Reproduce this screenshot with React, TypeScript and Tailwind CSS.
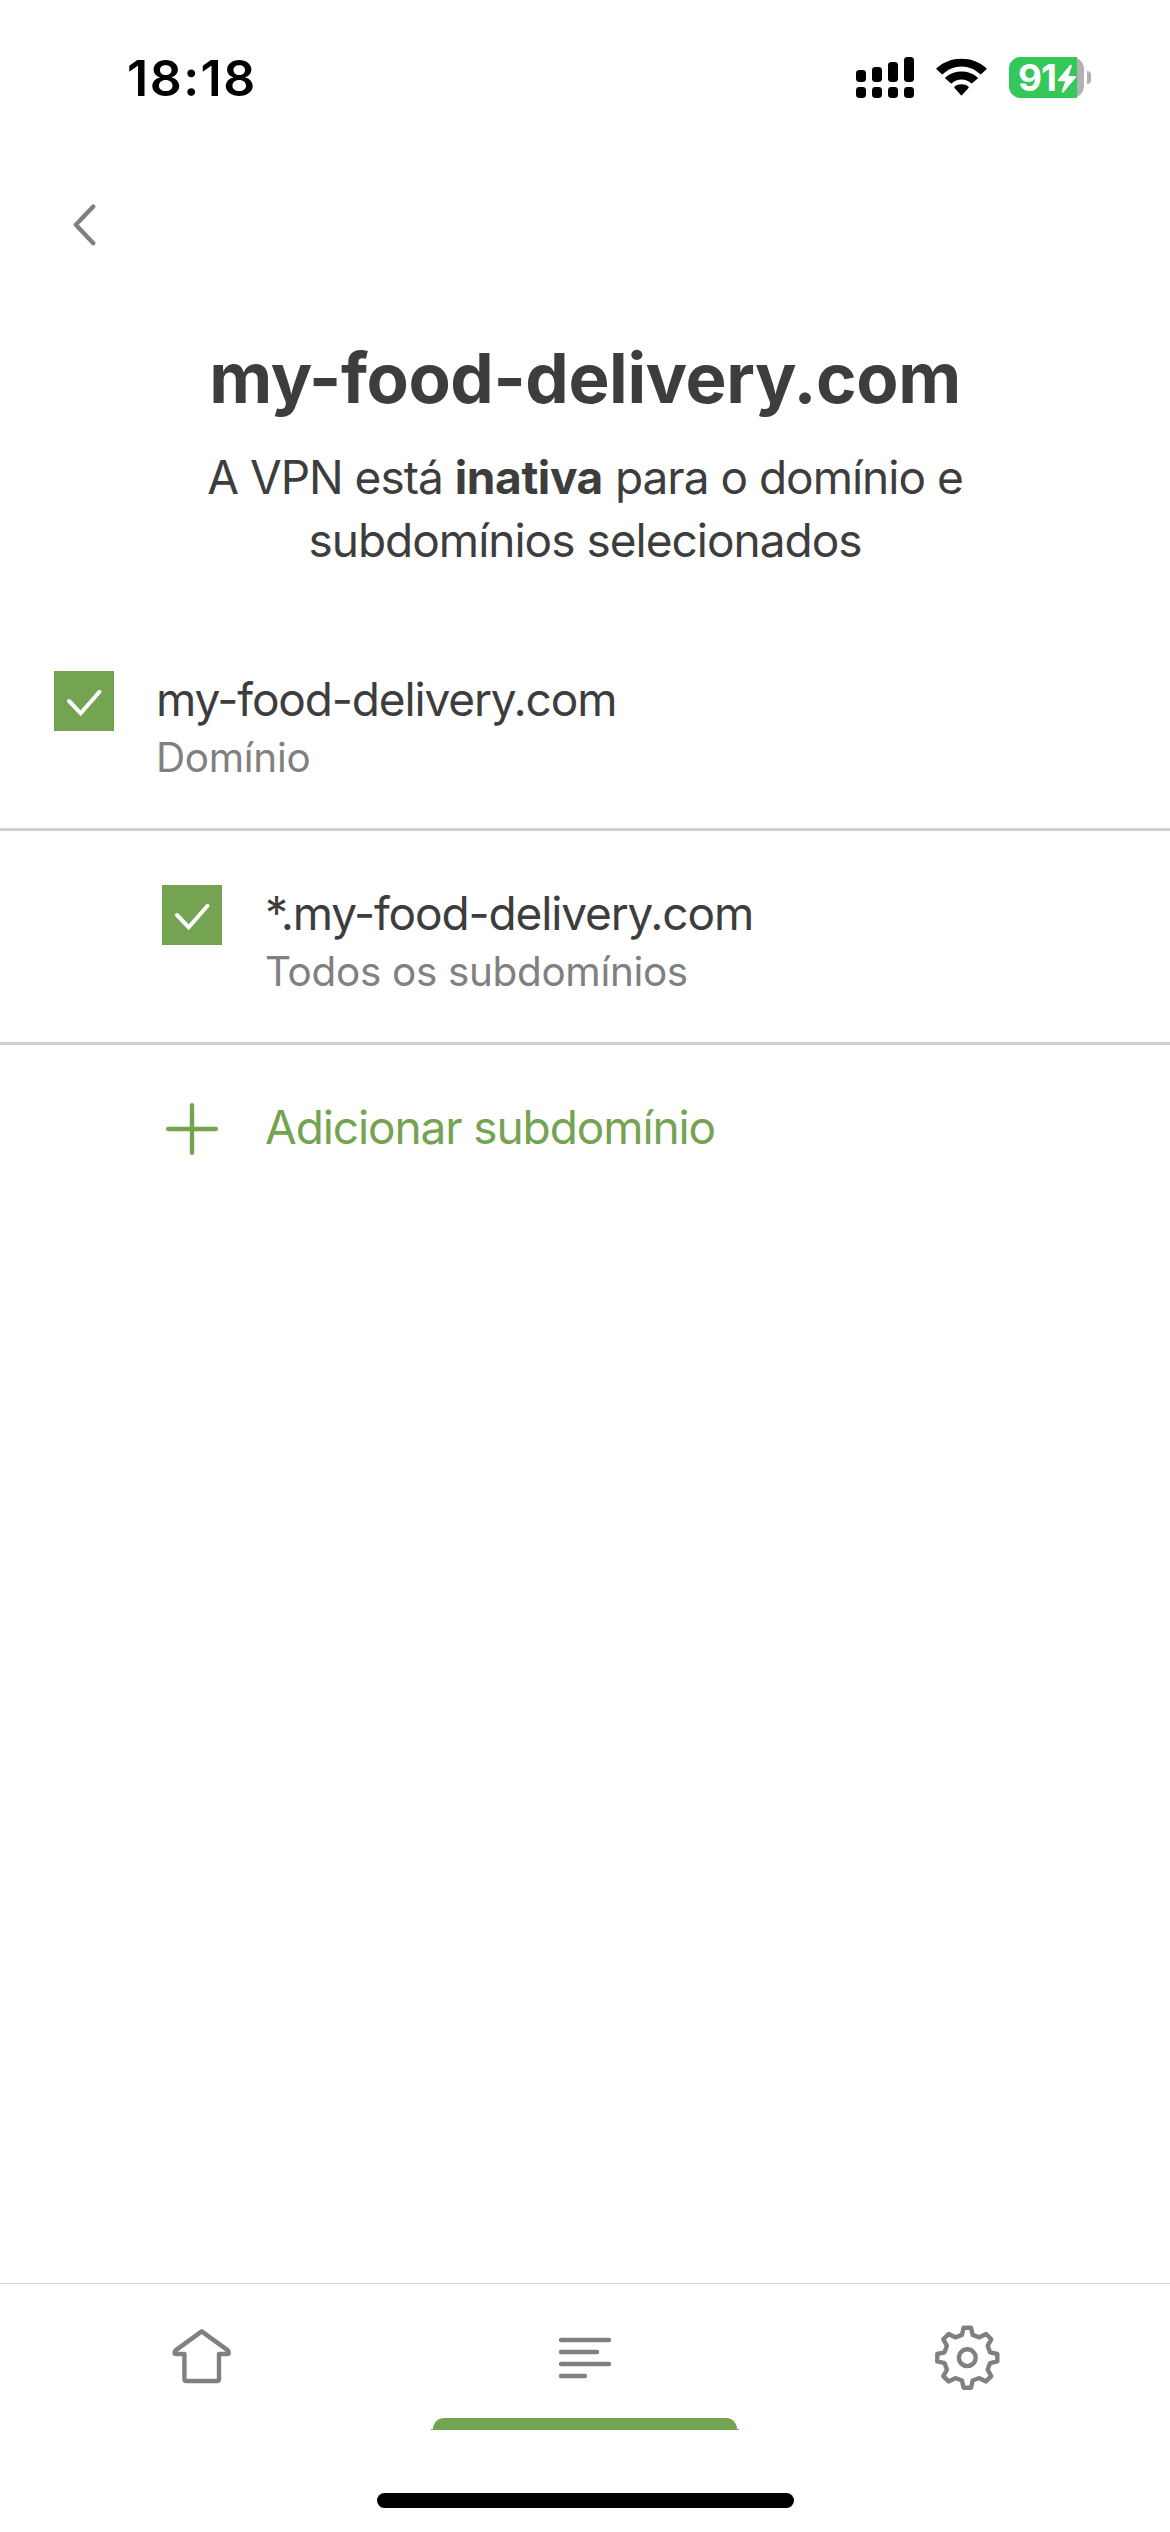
import type { ReactNode } from 'react';

interface DomainRowProps {
  name: string;
  description: string;
  nested?: boolean;
}

const StatusBar = () => (
  <div className="flex justify-between h-[148px] pt-[46px] pl-[127px] pr-[79px]">
    <span className="text-[50px] leading-[64px] font-semibold tracking-[1.5px] text-black">18:18</span>
    <div className="flex pt-[10px]">
      {/* Dual SIM signal */}
      <svg className="w-[58px] h-[43px]" viewBox="0 0 58 43" fill="#000">
        <rect x="0" y="14" width="10" height="12" rx="3.4" />
        <rect x="16" y="11" width="10" height="15" rx="3.4" />
        <rect x="32" y="6" width="10" height="20" rx="3.4" />
        <rect x="48" y="1" width="10" height="25" rx="3.4" />
        <rect x="0" y="31" width="10" height="11" rx="3.4" />
        <rect x="16" y="31" width="10" height="11" rx="3.4" />
        <rect x="32" y="31" width="10" height="11" rx="3.4" />
        <rect x="48" y="31" width="10" height="11" rx="3.4" />
      </svg>
      <svg className="ml-[22px] w-[51px] h-[43px]" viewBox="0 0 52 43" preserveAspectRatio="none" fill="#000">
        <path d="M26 10.5C33.2 10.5 39.9 13.3 44.9 18.1C45.3 18.4 45.9 18.4 46.3 18L51.2 13.6C51.7 13.2 51.7 12.5 51.2 12.1C44.5 6 35.6 2.7 26 2.7S7.5 6 0.8 12.1C0.3 12.5 0.3 13.2 0.8 13.6L5.7 18C6.1 18.4 6.7 18.4 7.1 18.1C12.1 13.3 18.8 10.5 26 10.5Z" />
        <path d="M26 23.4C29.8 23.4 33.2 24.8 35.9 27.2C36.3 27.5 36.9 27.5 37.2 27.1L42.2 22.7C42.7 22.3 42.7 21.6 42.2 21.2C37.9 17.3 32.2 15.4 26 15.4S14.1 17.3 9.8 21.2C9.3 21.6 9.3 22.3 9.8 22.7L14.8 27.1C15.1 27.5 15.7 27.5 16.1 27.2C18.8 24.8 22.2 23.4 26 23.4Z" />
        <path d="M33.1 31.9C33.5 31.5 33.5 30.9 33 30.5C31.1 29 28.7 28.2 26 28.2S20.9 29 19 30.5C18.5 30.9 18.5 31.5 18.9 31.9L25.3 39C25.7 39.5 26.3 39.5 26.7 39Z" />
      </svg>
      <div className="ml-[22px] mt-px flex items-center h-[41px]">
        <div className="relative w-[75px] h-[41px] rounded-[12px] bg-[#b2b2b2]">
          <div className="flex items-center w-[68px] h-[41px] pl-[9px] rounded-l-[12px] bg-[#34c759]">
            <span className="text-[37px] leading-[41px] font-bold tracking-[-1px] text-white">91</span>
          </div>
          <svg className="absolute left-[48px] top-[7px] w-[20px] h-[30px]" viewBox="0 0 20 30" fill="#fff">
            <path d="M12.7 1.2L0.9 15.7C0.3 16.5 0.7 17.2 1.6 17.2H8.3L4.8 27.1C4.3 28.5 5.9 29.1 6.8 28L18.9 13.4C19.5 12.6 19.1 11.9 18.2 11.9H11.5L14.8 2.2C15.2 0.8 13.6 0.1 12.7 1.2Z" />
          </svg>
        </div>
        <div className="ml-[3px] w-[4px] h-[13px] rounded-r-full bg-[#b2b2b2]" />
      </div>
    </div>
  </div>
);

const Checkbox = () => (
  <div className="mt-[2px] w-[60px] h-[60px] shrink-0 bg-[#74a352]">
    <svg className="w-[60px] h-[60px]" viewBox="0 0 60 60" fill="none" stroke="#fff" strokeWidth="4" strokeLinecap="round">
      <path d="M15 30L26.7 42.3L45.5 20.8" />
    </svg>
  </div>
);

const DomainRow = ({ name, description, nested }: DomainRowProps) => (
  <div className={`flex gap-[42px] h-[214px] pt-[52px] border-b-[3px] border-[#d1d1d1] ${nested ? 'pl-[162px]' : 'pl-[54px]'}`}>
    <Checkbox />
    <div className={nested ? 'pl-px' : ''}>
      <p className="text-[46px] leading-[60px] tracking-[-1.15px] text-[#3d3d3d]">{name}</p>
      <p className="mt-[5px] text-[40.4px] leading-[48px] tracking-[-0.3px] text-[#808080]">{description}</p>
    </div>
  </div>
);

const NavItem = ({ children, active }: { children: ReactNode; active?: boolean }) => (
  <div className="flex flex-1 flex-col items-center pt-[38px]">
    <svg className="w-[72px] h-[72px]" viewBox="0 0 72 72" fill="none" stroke="#808080" strokeWidth="4.4" strokeLinecap="round" strokeLinejoin="round">
      {children}
    </svg>
    {active && (
      <div className="mt-[24px] flex flex-col items-center">
        <div className="w-[304px] h-[11px] rounded-t-[12px] bg-[#74a352]" />
        <div className="w-[308px] h-px bg-[#74a352]" />
      </div>
    )}
  </div>
);

export default function App() {
  return (
    <div className="flex flex-col w-[1170px] h-[2532px] overflow-hidden bg-white font-['Inter','Liberation_Sans',sans-serif]">
      <StatusBar />

      <div className="h-[188px] pt-[52px] pl-[66px]">
        <svg className="w-[36px] h-[50px]" viewBox="0 0 36 50" fill="none" stroke="#808080" strokeWidth="4.4" strokeLinecap="round" strokeLinejoin="round">
          <path d="M27.3 6.5L9.8 24.8L27.3 43.2" />
        </svg>
      </div>

      <div className="h-[281px] text-center text-[#3d3d3d]">
        <h1 className="text-[69px] leading-[84px] font-bold tracking-[-0.4px]">my-food-delivery.com</h1>
        <p className="mt-[26px] text-[46px] leading-[63px] tracking-[-1px]">
          A VPN está <strong className="font-bold tracking-[-0.4px]">inativa</strong> para o domínio e
          <br />
          subdomínios selecionados
        </p>
      </div>

      <DomainRow name="my-food-delivery.com" description="Domínio" />
      <DomainRow name="*.my-food-delivery.com" description="Todos os subdomínios" nested />

      <div className="flex gap-[43px] pt-[52px] pl-[162px]">
        <svg className="mt-[2px] w-[60px] h-[60px]" viewBox="0 0 60 60" fill="none" stroke="#74a352" strokeWidth="4.4" strokeLinecap="round">
          <path d="M30 6.2V53.8M6.2 30H53.8" />
        </svg>
        <span className="text-[46px] leading-[60px] tracking-[-1.1px] text-[#74a352]">Adicionar subdomínio</span>
      </div>

      <div className="mt-auto h-[249px]">
        <div className="flex h-[147px] px-[11px] border-t border-[#d1d1d1]">
          <NavItem>
            <path d="M35.7 9.4L9.6 28.4Q6.8 32 10.6 32H18.4V57Q18.4 59 20.4 59H51Q53 59 53 57V32H60.8Q64.6 32 61.8 28.4Z" />
          </NavItem>
          <NavItem active>
            <path d="M12 18H60M12 30H48M12 42H60M12 54H36" />
          </NavItem>
          <NavItem>
            <path
              transform="translate(35.3 35.7)"
              d="M-3.7 -30H3.7L5.4 -22.8Q8.5 -21.5 12 -20.4Q15 -22 18.7 -23.7L24 -18.4Q22 -15 20.4 -12Q21.5 -8.5 22.8 -5.4L30 -3.7V3.7L22.8 5.4Q21.5 8.5 20.4 12Q22 15 24 18.4L18.7 23.7Q15 22 12 20.4Q8.5 21.5 5.4 22.8L3.7 30H-3.7L-5.4 22.8Q-8.5 21.5 -12 20.4Q-15 22 -18.7 23.7L-24 18.4Q-22 15 -20.4 12Q-21.5 8.5 -22.8 5.4L-30 3.7V-3.7L-22.8 -5.4Q-21.5 -8.5 -20.4 -12Q-22 -15 -24 -18.4L-18.7 -23.7Q-15 -22 -12 -20.4Q-8.5 -21.5 -5.4 -22.8Z"
            />
            <circle cx="35.3" cy="35.7" r="8.4" />
          </NavItem>
        </div>
        {/* Home indicator */}
        <div className="mx-auto mt-[63px] w-[417px] h-[15px] rounded-full bg-black" />
      </div>
    </div>
  );
}
